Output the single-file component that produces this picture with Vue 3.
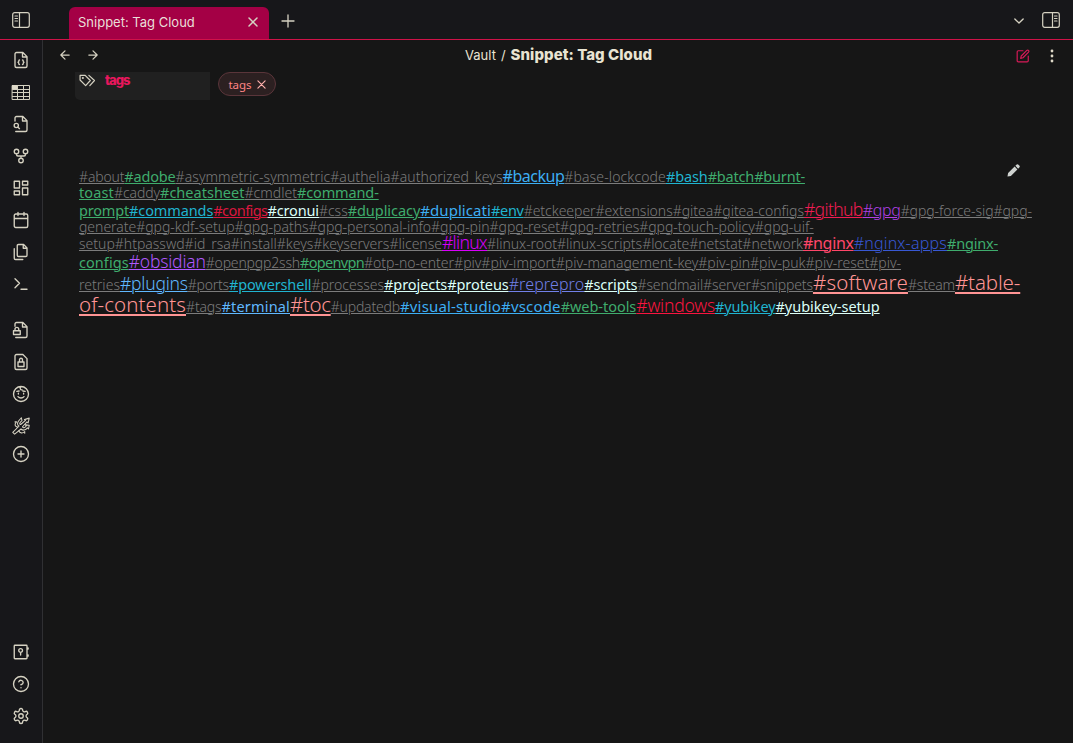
<script setup>
import { ref, onMounted } from 'vue'

const ribbonTop = [
  { y: 60, d: 'M14.5 2H6a2 2 0 0 0-2 2v16a2 2 0 0 0 2 2h12a2 2 0 0 0 2-2V7.500z M14 2v6h6 M10 12c-1 0-1 .500-1 1.500s-.500 1.500-1 1.500c.500 0 1 .500 1 1.500s0 1.500 1 1.500 M14 12c1 0 1 .500 1 1.500s.500 1.500 1 1.500c-.500 0-1 .500-1 1.500s0 1.500-1 1.500' },
  { y: 92, table: true },
  { y: 124, d: 'M4 8V4a2 2 0 0 1 2-2h8.500L20 7.500V20a2 2 0 0 1-2 2H5 M14 2v6h6 M8.500 14a2.800 2.800 0 1 1-5.600 0 2.800 2.800 0 0 1 5.600 0z M8 16.200l2 2' },
  { y: 156, d: 'M9 6a3 3 0 1 1-6 0 3 3 0 0 1 6 0z M21 6a3 3 0 1 1-6 0 3 3 0 0 1 6 0z M15 18a3 3 0 1 1-6 0 3 3 0 0 1 6 0z M6 9v1a2 2 0 0 0 2 2h8a2 2 0 0 0 2-2V9 M12 12v3' },
  { y: 188, d: 'M3 3h7v9H3z M14 3h7v5h-7z M14 12h7v9h-7z M3 16h7v5H3z' },
  { y: 220, d: 'M5 4h14a2 2 0 0 1 2 2v14a2 2 0 0 1-2 2H5a2 2 0 0 1-2-2V6a2 2 0 0 1 2-2z M16 2v4 M8 2v4 M3 10h18' },
  { y: 252, d: 'M15.500 2H8.600A1.600 1.600 0 0 0 7 3.600v12.800A1.600 1.600 0 0 0 8.600 18h9.800a1.600 1.600 0 0 0 1.600-1.600V6.500z M15 2v5h5 M3 7.600v12.800c0 .900.700 1.600 1.600 1.600h9.800' },
  { y: 284, d: 'M4 17l6-6-6-6 M12 19h8' },
  { y: 330, d: 'M4 7V4a2 2 0 0 1 2-2h8.500L20 7.500V20a2 2 0 0 1-2 2H5 M14 2v6h6 M2 13h9v5H2z M4 13v-2a2.500 2.500 0 0 1 5 0v2' },
  { y: 362, d: 'M14.500 2H6a2 2 0 0 0-2 2v16a2 2 0 0 0 2 2h12a2 2 0 0 0 2-2V7.500z M8 12h8v6H8z M10 12v-3a2 2 0 0 1 4 0v3' },
  { y: 394, d: 'M22 12a10 10 0 1 1-20 0 10 10 0 0 1 20 0z M8.500 11v1 M15.500 11v1 M8 15.500c2 2.500 6 2.500 8 0 M12 2c-2 2-1 5 1.500 4.500 M6.500 8.500l3-.500 M17.500 8.500l-3-.500' },
  { y: 426, fine: true, d: 'M1 20.500L9.500 12C7 11 6.500 8 9 5L12.500 1l.8 3.800C10 7.500 9.500 9.500 11.500 10L18 4.500 16.500 3.500 23 1.500 21.500 8 20 6.500 14 13c.8 2 2.500 2 5-1L18 10.500l5 .5-1 5-1.500-1.500c-3 3.500-6 3.800-8.500 1.500L3.500 22.800z M7.500 13.500C3.500 13 3 9.500 6 6.500L4 6.500 M9 18c1.500 4 5 4 8 1.500v2' },
  { y: 454, d: 'M22 12a10 10 0 1 1-20 0 10 10 0 0 1 20 0z M8 12h8 M12 8v8' },
]
const ribbonBottom = [
  { y: 652, d: 'M4 3h15a1 1 0 0 1 1 1v16a1 1 0 0 1-1 1H4a1 1 0 0 1-1-1V4a1 1 0 0 1 1-1z M14 10a2.500 2.500 0 1 1-5 0 2.500 2.500 0 0 1 5 0z M11.500 12.500V16 M21.500 6.500v1.500 M21.500 16v1.500' },
  { y: 684, d: 'M22 12a10 10 0 1 1-20 0 10 10 0 0 1 20 0z M9.100 9a3 3 0 0 1 5.800 1c0 2-3 3-3 3 M12 17h.01' },
  { y: 716, d: 'M12.200 2h-.400a2 2 0 0 0-2 2v.200a2 2 0 0 1-1 1.700l-.400.300a2 2 0 0 1-2 0l-.200-.100a2 2 0 0 0-2.700.700l-.200.400a2 2 0 0 0 .700 2.700l.200.100a2 2 0 0 1 1 1.700v.600a2 2 0 0 1-1 1.700l-.200.100a2 2 0 0 0-.700 2.700l.200.400a2 2 0 0 0 2.700.700l.200-.100a2 2 0 0 1 2 0l.400.300a2 2 0 0 1 1 1.700v.200a2 2 0 0 0 2 2h.400a2 2 0 0 0 2-2v-.200a2 2 0 0 1 1-1.700l.400-.300a2 2 0 0 1 2 0l.200.100a2 2 0 0 0 2.700-.700l.200-.400a2 2 0 0 0-.700-2.700l-.200-.100a2 2 0 0 1-1-1.700v-.600a2 2 0 0 1 1-1.700l.200-.100a2 2 0 0 0 .700-2.700l-.200-.400a2 2 0 0 0-2.700-.700l-.200.100a2 2 0 0 1-2 0l-.400-.300a2 2 0 0 1-1-1.700V4a2 2 0 0 0-2-2z M15 12a3 3 0 1 1-6 0 3 3 0 0 1 6 0z' },
]
// The first button starts 11px below the title bar; the rest follow at their own pitch.
ribbonTop.forEach((b, i) => { b.gap = i ? b.y - ribbonTop[i - 1].y - 18 : 11 })

// Each row: step to its baseline, then runs of [text, style, width].
const rows = [
  [22, [['#about', 'gray', 45.3], ['#adobe', 'green', 51.3], ['#asymmetric-symmetric#authelia#authorized_keys', 'gray', 327], ['#backup', 'blue s16', 61.7], ['#base-lockcode', 'gray', 101.7], ['#bash', 'cyan', 41.7], ['#batch#burnt-', 'green', 97.3]]],
  [16, [['toast', 'green', 35], ['#caddy', 'gray', 46], ['#cheatsheet', 'green', 84.5], ['#cmdlet', 'gray', 52.5], ['#command-', 'green', 81.7]]],
  [18, [['prompt', 'green', 50], ['#commands', 'cyan', 84.3], ['#configs', 'crimson', 54.2], ['#cronui', 'white', 51.5], ['#css', 'gray', 28.7], ['#duplicacy', 'green', 72.6], ['#duplicati', 'blue s15', 70.7], ['#env', 'cyan', 32.700], ['#etckeeper#extensions#gitea#gitea-configs', 'gray', 280.3], ['#github', 'rose s17', 58.7], ['#gpg', 'violet s16', 38], ['#gpg-force-sig#gpg-', 'gray', 131.3]]],
  [16, [['generate#gpg-kdf-setup#gpg-paths#gpg-personal-info#gpg-pin#gpg-reset#gpg-retries#gpg-touch-policy#gpg-uif-', 'gray', 734.7]]],
  [17, [['setup#htpasswd#id_rsa#install#keys#keyservers#license', 'gray', 363], ['#linux', 'magenta s17', 45], ['#linux-root#linux-scripts#locate#netstat#network', 'gray', 316], ['#nginx', 'coral s16', 50.7], ['#nginx-apps', 'navy s16', 93.3], ['#nginx-', 'green', 51]]],
  [19, [['configs', 'green', 49.7], ['#obsidian', 'purple s17', 77], ['#openpgp2ssh', 'gray', 94.3], ['#openvpn', 'green', 64], ['#otp-no-enter#piv#piv-import#piv-management-key#piv-pin#piv-puk#piv-reset#piv-', 'gray', 537]]],
  [22, [['retries', 'gray', 41], ['#plugins', 'sky s17', 67.7], ['#ports', 'gray', 41.3], ['#powershell', 'cyan', 82.5], ['#processes', 'gray', 72.5], ['#projects#proteus', 'white', 124.7], ['#reprepro', 'indigo s16', 75.6], ['#scripts', 'white', 53.2], ['#sendmail#server#snippets', 'gray', 175.5], ['#software', 'salmon s20', 95], ['#steam', 'gray', 47], ['#table-', 'salmon s20', 65.3]]],
  [22, [['of-contents', 'salmon s20', 107], ['#tags', 'gray', 35.5], ['#terminal', 'sky', 68.5], ['#toc', 'salmon s20', 40.7], ['#updatedb', 'gray', 69.3], ['#visual-studio#vscode', 'blue s15', 160.7], ['#web-tools', 'green', 75.6], ['#windows', 'red s17', 78.7], ['#yubikey', 'cyan', 60.5], ['#yubikey-setup', 'white', 104.2]]],
]

const cloud = ref(null)
onMounted(async () => {
  await document.fonts.ready
  for (const el of cloud.value.querySelectorAll('.run')) {
    const text = el.firstElementChild
    const gap = +el.dataset.width - text.getBoundingClientRect().width
    text.style.letterSpacing = gap / text.textContent.length + 'px'
  }
})
</script>

<template>
  <div class="app">
    <header class="titlebar">
      <svg class="panel-icon" viewBox="0 0 18 16"><rect x=".7" y=".7" width="16.600" height="14.600" rx="2" /><path d="M7.500 1v14M3 4h2.500M3 6.500h2.500M3 9h2.500" /></svg>
      <div class="tab"><span>Snippet: Tag Cloud</span><svg class="close" viewBox="0 0 10 10"><path d="M1 1l8 8M9 1L1 9" /></svg></div>
      <svg class="plus" viewBox="0 0 12 12"><path d="M6 0v12M0 6h12" /></svg>
      <svg class="chevron" viewBox="0 0 12 7"><path d="M1 1l5 5 5-5" /></svg>
      <svg class="panel-icon right" viewBox="0 0 18 16"><rect x=".7" y=".7" width="16.600" height="14.600" rx="2" /><path d="M10.500 1v14M12.500 4H15M12.500 6.500H15M12.500 9H15" /></svg>
    </header>
    <div class="body">
      <nav class="ribbon">
        <div v-for="b in ribbonTop" :key="b.y" class="slot" :style="{ marginTop: b.gap + 'px' }">
          <svg v-if="b.table" class="table-icon" viewBox="0 0 18 15"><path d="M.5.5h17v14H.5zM.5 4.500h17M.5 7.500h17M.5 11.500h17M5.500.5v14M11.500.5v14" /><path class="solid" d="M0 0h5v4H0z" /></svg>
          <svg v-else class="icon" :class="{ fine: b.fine }" viewBox="0 0 24 24"><path :d="b.d" /></svg>
        </div>
        <div class="bottom">
          <div v-for="b in ribbonBottom" :key="b.y" class="slot"><svg class="icon" viewBox="0 0 24 24"><path :d="b.d" /></svg></div>
        </div>
      </nav>
      <main class="view">
        <div class="view-head">
          <svg class="arrow" viewBox="0 0 12 12"><path d="M11 6H1M6 1L1 6l5 5" /></svg>
          <svg class="arrow next" viewBox="0 0 12 12"><path d="M1 6h10M6 1l5 5-5 5" /></svg>
          <div class="crumbs"><span>Vault</span><span class="slash">/</span><b>Snippet: Tag Cloud</b></div>
          <svg class="edit" viewBox="0 0 24 24"><path d="M12 3H4a2 2 0 0 0-2 2v15a2 2 0 0 0 2 2h15a2 2 0 0 0 2-2v-8M18.500 2.500a2.100 2.100 0 0 1 3 3L12 15l-4 1 1-4z" /></svg>
          <svg class="more" viewBox="0 0 4 14"><circle cx="2" cy="2" r="1.400" /><circle cx="2" cy="7" r="1.400" /><circle cx="2" cy="12" r="1.400" /></svg>
        </div>
        <div class="property">
          <div class="key">
            <svg viewBox="0 0 18 14"><path d="M1 1.500h5.500l5.500 5.500-5 5.500-6-6zM10.500 1.500L16.500 7l-5 5.500" /><circle cx="4" cy="4.300" r=".5" /></svg>
            <b>tags</b>
          </div>
          <div class="pill"><span>tags</span><svg viewBox="0 0 10 10"><path d="M1 1l8 8M9 1L1 9" /></svg></div>
        </div>
        <section ref="cloud" class="cloud">
          <div v-for="(row, i) in rows" :key="i" class="row">
            <i class="strut" :style="{ height: row[0] + 'px' }"></i>
            <a v-for="(run, j) in row[1]" :key="j" class="run" :class="run[1]" :data-width="run[2]" :style="{ width: run[2] + 'px' }"><span>{{ run[0] }}</span></a>
          </div>
          <svg class="pencil" viewBox="0 0 14 14"><path d="M.5 13.500l.7-3.700 7-7 3 3-7 7zM9 2l1.500-1.500q.8-.6 1.500 0l1.500 1.500q.6.8 0 1.500L12 5z" /></svg>
        </section>
      </main>
    </div>
  </div>
</template>

<style>
body { margin: 0; background: #161616; }
</style>
<style scoped>
.app { width: 1073px; height: 743px; overflow: hidden; display: flex; flex-direction: column; background: #161616; color: #e9e4d2; font-family: Inter, "Liberation Sans", sans-serif; }
svg { display: block; flex: none; fill: none; stroke: #d6d2c2; stroke-linecap: round; stroke-linejoin: round; overflow: visible; }
.titlebar { height: 39px; box-sizing: content-box; border-bottom: 1px solid #d01249; background: #17171a; display: flex; align-items: center; }
.panel-icon { width: 18px; height: 16px; margin-left: 12px; stroke-width: 1.2; }
.tab { align-self: flex-end; box-sizing: border-box; width: 200px; height: 32px; margin-left: 39px; padding: 0 11px 2px 9px; border-radius: 6px 6px 0 0; background: #a40045; display: flex; align-items: center; justify-content: space-between; font-size: 13px; color: #eadfd8; letter-spacing: 0; }
.close { width: 10px; height: 10px; stroke-width: 1.5; }
.plus { width: 12px; height: 12px; margin: 2px 0 0 13px; stroke-width: 1.3; }
.chevron { width: 10px; height: 6px; margin: 3px 0 0 auto; stroke-width: 1.6; }
.panel-icon.right { margin: 0 13px 0 18px; }
.body { flex: 1; min-height: 0; display: flex; }
.ribbon { box-sizing: border-box; width: 43px; padding-right: 1px; border-right: 1px solid #303033; background: #17171a; display: flex; flex-direction: column; align-items: center; }
.slot { width: 18px; height: 18px; display: flex; align-items: center; justify-content: center; flex: none; }
.icon { width: 18px; height: 18px; stroke-width: 1.8; }
.icon.fine { stroke-width: 1.4; }
.table-icon { width: 18px; height: 15px; stroke-width: 1; }
.solid { fill: #ded9c8; stroke: none; }
.bottom { margin-top: auto; padding-bottom: 18px; display: flex; flex-direction: column; gap: 14px; }
.view { flex: 1; min-width: 0; display: flex; flex-direction: column; }
.view-head { height: 32px; display: flex; align-items: center; padding-left: 17px; }
.arrow { width: 10px; height: 10px; stroke-width: 1.5; margin-bottom: 2px; }
.arrow.next { margin-left: 18px; }
.crumbs { flex: 1; margin-left: 367px; display: flex; align-items: baseline; font-size: 13px; margin-bottom: 3px; white-space: nowrap; }
.slash { margin: 0 5px; }
.crumbs b { font-size: 15px; font-weight: 800; letter-spacing: .05px; }
.edit { width: 14px; height: 14px; stroke: #d91a58; stroke-width: 2; margin-right: 1px; margin-bottom: 1px; }
.more { width: 4px; height: 14px; margin: 0 19px 1px 19px; fill: #ded9c8; stroke: none; }
.property { height: 28px; margin-left: 32px; display: flex; }
.key { width: 135px; height: 28px; background: #202020; border-radius: 0 0 0 5px; display: flex; font-size: 13px; color: #e8175d; }
.key svg { width: 17px; height: 13px; margin: 2px 9px 0 4px; stroke-width: 1.3; }
.key b { line-height: 17px; letter-spacing: -1px; font-weight: 800; }
.pill { box-sizing: border-box; width: 58px; height: 24px; margin-left: 8px; border: 1px solid #5a353a; border-radius: 12px; background: #2c2021; color: #ff8585; display: flex; align-items: center; justify-content: center; gap: 5px; font: 11.5px "Noto Sans", sans-serif; }
.pill svg { width: 9px; height: 9px; stroke: #ffb0ad; stroke-width: 1.3; margin-top: 1px; }
.cloud { position: relative; margin: 60px 0 0 36px; font-family: "Noto Sans", sans-serif; }
.row { display: flex; align-items: baseline; }
.strut { flex: none; width: 0; }
.run { flex: none; line-height: 0; white-space: nowrap; font-size: 14.5px; text-decoration: underline; text-decoration-thickness: 1px; text-underline-offset: 1px; }
.s15 { font-size: 15px; }
.s16 { font-size: 16px; }
.s17 { font-size: 17.5px; font-weight: 300; }
.s20 { font-size: 20.5px; font-weight: 300; text-decoration-thickness: 2px; text-underline-offset: 2px; }
.gray { color: #7c7c7c; font-size: 14px; font-weight: 300; }
.green { color: #3fac6d; }
.blue { color: #3daef3; }
.sky { color: #60b8ff; }
.cyan { color: #20b4d0; }
.crimson { color: #dc173f; }
.rose { color: #f01c53; }
.red { color: #f81540; }
.coral { color: #ff4669; }
.white { color: #dbfff8; }
.violet { color: #b040e4; font-weight: 300; }
.magenta { color: #d800fa; }
.purple { color: #b058ff; }
.navy { color: #3858d4; font-weight: 300; }
.indigo { color: #7180e8; font-weight: 300; }
.salmon { color: #ff9494; }
.pencil { position: absolute; left: 928px; top: 4px; width: 13px; height: 13px; fill: #cfd3d0; stroke: none; }
</style>
